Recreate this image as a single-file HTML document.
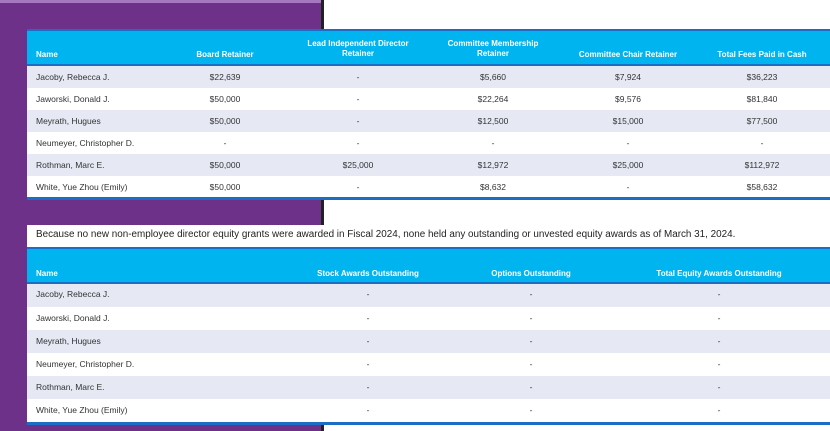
<!DOCTYPE html>
<html><head><meta charset="utf-8"><style>
*{margin:0;padding:0;box-sizing:border-box}
body{width:830px;height:431px;background:#fff;position:relative;overflow:hidden;font-family:"Liberation Sans",Arial,sans-serif;}
.purple{position:absolute;left:0;top:0;width:321px;height:431px;background:#6e3189;border-top:3px solid #a877c2;}
.edge{position:absolute;left:321px;top:0;width:3px;height:431px;background:#222;}
.t{position:absolute;left:27px;width:803px;background:#fff;border-top:2px solid #1a6fc4;border-bottom:3px solid #1a6fc4;}
.hd{background:#00b4ef;border-bottom:2px solid #1a6fc4;color:#fff;font-weight:bold;font-size:8px;position:relative}
.row{position:relative;font-size:8.5px;color:#333}
.c{position:absolute;text-align:center;transform:translateX(-50%);white-space:nowrap;line-height:10px}
.n{position:absolute;left:9px;line-height:10px}
.txt{position:absolute;left:27px;top:225px;width:803px;height:22px;background:#fff;font-size:9.9px;color:#222;padding:4px 0 0 9px;white-space:nowrap}
</style></head><body>
<div class="purple"></div><div class="edge"></div>

<div class="t" style="top:29px">
<div class="hd" style="height:35px">
<span class="n" style="top:19px">Name</span>
<span class="c" style="left:198px;top:19px">Board Retainer</span>
<span class="c" style="left:331px;top:8px">Lead Independent Director<br>Retainer</span>
<span class="c" style="left:466px;top:8px">Committee Membership<br>Retainer</span>
<span class="c" style="left:601px;top:19px">Committee Chair Retainer</span>
<span class="c" style="left:735px;top:19px">Total Fees Paid in Cash</span>
</div>
<div>
<div class="row" style="height:22px;background:#e6e9f4"><span class="n" style="top:6px">Jacoby, Rebecca J.</span><span class="c" style="left:198px;top:6px">$22,639</span><span class="c" style="left:331px;top:6px">-</span><span class="c" style="left:466px;top:6px">$5,660</span><span class="c" style="left:601px;top:6px">$7,924</span><span class="c" style="left:735px;top:6px">$36,223</span></div>
<div class="row" style="height:22px;background:#fff"><span class="n" style="top:6px">Jaworski, Donald J.</span><span class="c" style="left:198px;top:6px">$50,000</span><span class="c" style="left:331px;top:6px">-</span><span class="c" style="left:466px;top:6px">$22,264</span><span class="c" style="left:601px;top:6px">$9,576</span><span class="c" style="left:735px;top:6px">$81,840</span></div>
<div class="row" style="height:22px;background:#e6e9f4"><span class="n" style="top:6px">Meyrath, Hugues</span><span class="c" style="left:198px;top:6px">$50,000</span><span class="c" style="left:331px;top:6px">-</span><span class="c" style="left:466px;top:6px">$12,500</span><span class="c" style="left:601px;top:6px">$15,000</span><span class="c" style="left:735px;top:6px">$77,500</span></div>
<div class="row" style="height:22px;background:#fff"><span class="n" style="top:6px">Neumeyer, Christopher D.</span><span class="c" style="left:198px;top:6px">-</span><span class="c" style="left:331px;top:6px">-</span><span class="c" style="left:466px;top:6px">-</span><span class="c" style="left:601px;top:6px">-</span><span class="c" style="left:735px;top:6px">-</span></div>
<div class="row" style="height:22px;background:#e6e9f4"><span class="n" style="top:6px">Rothman, Marc E.</span><span class="c" style="left:198px;top:6px">$50,000</span><span class="c" style="left:331px;top:6px">$25,000</span><span class="c" style="left:466px;top:6px">$12,972</span><span class="c" style="left:601px;top:6px">$25,000</span><span class="c" style="left:735px;top:6px">$112,972</span></div>
<div class="row" style="height:21px;background:#fff"><span class="n" style="top:6px">White, Yue Zhou (Emily)</span><span class="c" style="left:198px;top:6px">$50,000</span><span class="c" style="left:331px;top:6px">-</span><span class="c" style="left:466px;top:6px">$8,632</span><span class="c" style="left:601px;top:6px">-</span><span class="c" style="left:735px;top:6px">$58,632</span></div>
</div>
</div>

<div class="txt">Because no new non-employee director equity grants were awarded in Fiscal 2024, none held any outstanding or unvested equity awards as of March 31, 2024.</div>

<div class="t" style="top:247px">
<div class="hd" style="height:35px">
<span class="n" style="top:20px">Name</span>
<span class="c" style="left:341px;top:20px">Stock Awards Outstanding</span>
<span class="c" style="left:504px;top:20px">Options Outstanding</span>
<span class="c" style="left:692px;top:20px">Total Equity Awards Outstanding</span>
</div>
<div class="row" style="height:23px;background:#e6e9f4"><span class="n" style="top:5px">Jacoby, Rebecca J.</span><span class="c" style="left:341px;top:5px">-</span><span class="c" style="left:504px;top:5px">-</span><span class="c" style="left:692px;top:5px">-</span></div>
<div class="row" style="height:23px;background:#fff"><span class="n" style="top:6px">Jaworski, Donald J.</span><span class="c" style="left:341px;top:6px">-</span><span class="c" style="left:504px;top:6px">-</span><span class="c" style="left:692px;top:6px">-</span></div>
<div class="row" style="height:23px;background:#e6e9f4"><span class="n" style="top:6px">Meyrath, Hugues</span><span class="c" style="left:341px;top:6px">-</span><span class="c" style="left:504px;top:6px">-</span><span class="c" style="left:692px;top:6px">-</span></div>
<div class="row" style="height:23px;background:#fff"><span class="n" style="top:6px">Neumeyer, Christopher D.</span><span class="c" style="left:341px;top:6px">-</span><span class="c" style="left:504px;top:6px">-</span><span class="c" style="left:692px;top:6px">-</span></div>
<div class="row" style="height:23px;background:#e6e9f4"><span class="n" style="top:6px">Rothman, Marc E.</span><span class="c" style="left:341px;top:6px">-</span><span class="c" style="left:504px;top:6px">-</span><span class="c" style="left:692px;top:6px">-</span></div>
<div class="row" style="height:23px;background:#fff"><span class="n" style="top:6px">White, Yue Zhou (Emily)</span><span class="c" style="left:341px;top:6px">-</span><span class="c" style="left:504px;top:6px">-</span><span class="c" style="left:692px;top:6px">-</span></div>
</div>
</body></html>
